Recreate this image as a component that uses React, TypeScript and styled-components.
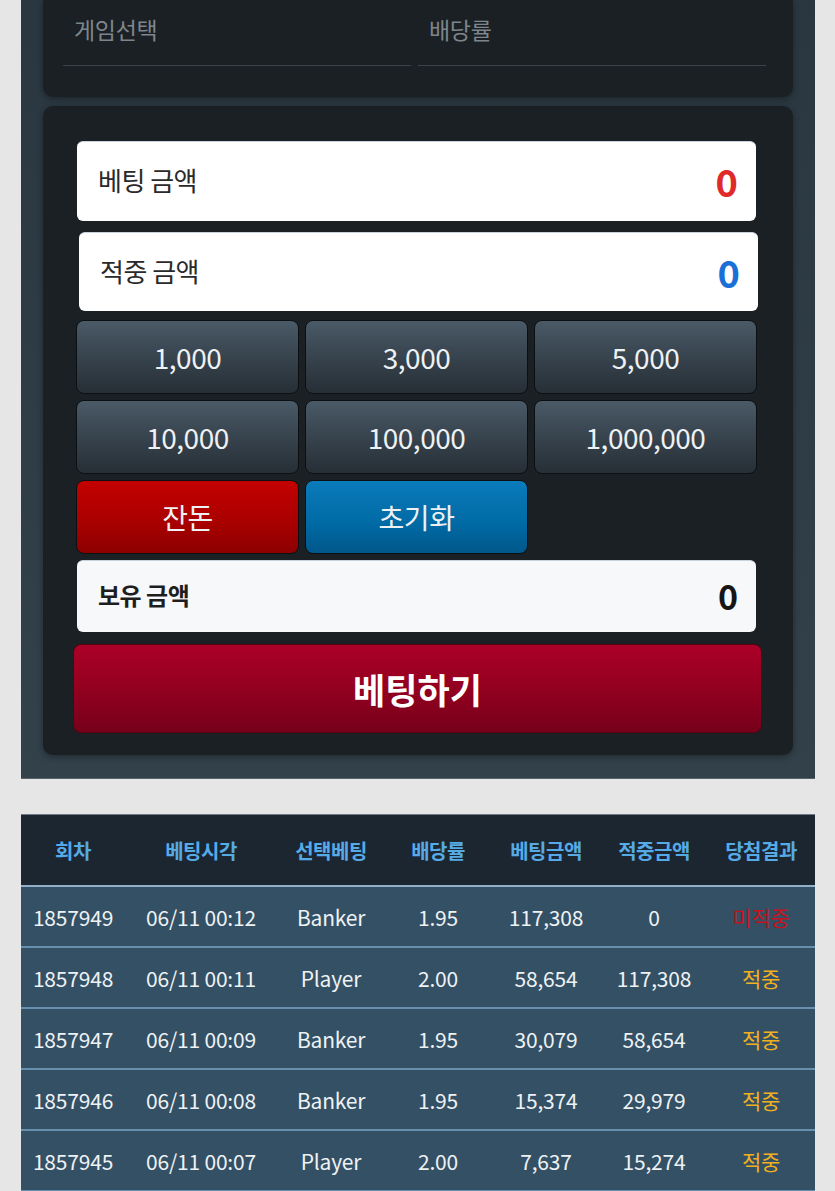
import React, { memo } from 'react'
import styled, { createGlobalStyle } from 'styled-components'

const GlobalStyle = createGlobalStyle`
  html, body {
    margin: 0;
    padding: 0;
    background: #e6e6e6;
  }
  body {
    font-family: "Noto Sans CJK KR", "Noto Sans", Roboto, sans-serif;
  }
  * {
    box-sizing: border-box;
  }
`

const Page = styled.div`
  width: 835px;
  min-height: 1191px;
  padding: 0 20px 0 21px;
  background: #e6e6e6;
`

const Panel = styled.div`
  width: 794px;
  padding: 0 22px 23px;
  background: linear-gradient(180deg, #2a3740 0%, #33414a 100%);
  border-bottom: 1px solid #55636c;
`

const Card = styled.div<{ $top?: boolean }>`
  background: #1b2024;
  border-radius: ${(p) => (p.$top ? '0 0 10px 10px' : '10px')};
  box-shadow: 0 2px 6px rgba(0, 0, 0, 0.35);
`

const SelectCard = styled(Card)`
  height: 97px;
  padding: 0 27px 0 20px;
  display: grid;
  grid-template-columns: 348px 348px;
  gap: 7px;
`

const Field = styled.div`
  height: 66px;
  border-bottom: 1px solid #3a4248;
  padding: 11px 0 0 11px;
  color: #7e868c;
  font-size: 23px;
  line-height: 36px;
  letter-spacing: -0.3px;
`

const BetCard = styled(Card)`
  margin-top: 9px;
  height: 649px;
  padding: 35px 37px 22px 34px;
  display: flex;
  flex-direction: column;
`

const AmountBox = styled.div<{ $shift?: number; $h: number; $bg?: string }>`
  height: ${(p) => p.$h}px;
  margin-left: ${(p) => p.$shift || 0}px;
  margin-right: ${(p) => -(p.$shift || 0)}px;
  background: ${(p) => p.$bg || '#ffffff'};
  border-radius: 6px;
  border-top: 1px solid #c9d3df;
  display: flex;
  align-items: center;
  justify-content: space-between;
  padding: 0 18px 0 21px;
`

const AmountLabel = styled.div<{ $bold?: boolean }>`
  color: ${(p) => (p.$bold ? '#1e1e1e' : '#2a2a2a')};
  font-size: ${(p) => (p.$bold ? '24px' : '26px')};
  font-weight: ${(p) => (p.$bold ? 700 : 400)};
  letter-spacing: -0.5px;
  margin-top: -4px;
`

const AmountValue = styled.div<{ $color: string; $size: number }>`
  color: ${(p) => p.$color};
  font-size: ${(p) => p.$size}px;
  font-weight: 700;
  line-height: 1;
`

const ChipGrid = styled.div`
  margin-top: 9px;
  display: grid;
  grid-template-columns: repeat(3, 1fr);
  grid-auto-rows: 74px;
  gap: 6px;
  margin-left: -1px;
  margin-right: -1px;
`

const tones = {
  gray: 'linear-gradient(180deg, #4a5a67 0%, #35414b 55%, #262f36 100%)',
  red: 'linear-gradient(180deg, #c40000 0%, #a80000 60%, #8c0000 100%)',
  blue: 'linear-gradient(180deg, #0a7bbb 0%, #006aa4 60%, #00578a 100%)',
}

const Chip = styled.button<{ $tone: keyof typeof tones }>`
  border: 1.5px solid #0d1013;
  border-radius: 8px;
  background: ${(p) => tones[p.$tone]};
  color: #eef1f3;
  font-family: inherit;
  font-size: 28px;
  font-weight: 400;
  letter-spacing: -0.5px;
  padding: 0;
  cursor: pointer;
`

const SubmitButton = styled.button`
  margin: 12px -6px 0 -4px;
  height: 90px;
  border: 1px solid #5a0010;
  border-radius: 8px;
  background: linear-gradient(180deg, #ab0028 0%, #930020 50%, #76001a 100%);
  color: #ffffff;
  font-family: inherit;
  font-size: 35px;
  font-weight: 700;
  cursor: pointer;
`

const Table = styled.div`
  margin-top: 35px;
  width: 794px;
  border-top: 1px solid #6d7a84;
`

const cols = '104px 152px 108px 106px 110px 106px 108px'

const HeadRow = styled.div`
  display: grid;
  grid-template-columns: ${cols};
  height: 72px;
  align-items: center;
  background: #1b2631;
  border-bottom: 2px solid #8fb0c8;
`

const HeadCell = styled.div`
  text-align: center;
  color: #56aae6;
  font-size: 20px;
  font-weight: 700;
  letter-spacing: -0.5px;
`

const Row = styled.div`
  display: grid;
  grid-template-columns: ${cols};
  height: 61px;
  align-items: center;
  background: #345064;
  border-bottom: 2px solid #6790b0;
`

const Cell = styled.div<{ $color?: string }>`
  text-align: center;
  color: ${(p) => p.$color || '#eef2f5'};
  font-size: 21px;
  letter-spacing: -0.2px;
  white-space: nowrap;
`

const chips: { label: string; tone: keyof typeof tones }[] = [
  { label: '1,000', tone: 'gray' },
  { label: '3,000', tone: 'gray' },
  { label: '5,000', tone: 'gray' },
  { label: '10,000', tone: 'gray' },
  { label: '100,000', tone: 'gray' },
  { label: '1,000,000', tone: 'gray' },
  { label: '잔돈', tone: 'red' },
  { label: '초기화', tone: 'blue' },
]

const heads = ['회차', '베팅시각', '선택베팅', '배당률', '베팅금액', '적중금액', '당첨결과']

const history = [
  ['1857949', '06/11 00:12', 'Banker', '1.95', '117,308', '0', '미적중'],
  ['1857948', '06/11 00:11', 'Player', '2.00', '58,654', '117,308', '적중'],
  ['1857947', '06/11 00:09', 'Banker', '1.95', '30,079', '58,654', '적중'],
  ['1857946', '06/11 00:08', 'Banker', '1.95', '15,374', '29,979', '적중'],
  ['1857945', '06/11 00:07', 'Player', '2.00', '7,637', '15,274', '적중'],
]

const resultColor = (r: string) => (r === '적중' ? '#f2b01e' : '#c8101c')

const App: React.FC = memo(() => {
  return (
    <Page>
      <GlobalStyle />
      <Panel>
        <SelectCard $top>
          <Field>게임선택</Field>
          <Field>배당률</Field>
        </SelectCard>
        <BetCard>
          <AmountBox $h={80}>
            <AmountLabel>베팅 금액</AmountLabel>
            <AmountValue $color="#e02a2a" $size={38}>0</AmountValue>
          </AmountBox>
          <div style={{ height: 12 }} />
          <AmountBox $h={79} $shift={2}>
            <AmountLabel>적중 금액</AmountLabel>
            <AmountValue $color="#1b70d8" $size={38}>0</AmountValue>
          </AmountBox>
          <ChipGrid>
            {chips.map((c) => (
              <Chip key={c.label} $tone={c.tone}>{c.label}</Chip>
            ))}
          </ChipGrid>
          <div style={{ height: 6 }} />
          <AmountBox $h={72} $bg="#f7f8f9">
            <AmountLabel $bold>보유 금액</AmountLabel>
            <AmountValue $color="#161616" $size={34}>0</AmountValue>
          </AmountBox>
          <SubmitButton>베팅하기</SubmitButton>
        </BetCard>
      </Panel>
      <Table>
        <HeadRow>
          {heads.map((h) => (
            <HeadCell key={h}>{h}</HeadCell>
          ))}
        </HeadRow>
        {history.map((row) => (
          <Row key={row[0]}>
            {row.map((v, i) => (
              <Cell key={i} $color={i === 6 ? resultColor(v) : undefined}>{v}</Cell>
            ))}
          </Row>
        ))}
      </Table>
    </Page>
  )
})

export default App
